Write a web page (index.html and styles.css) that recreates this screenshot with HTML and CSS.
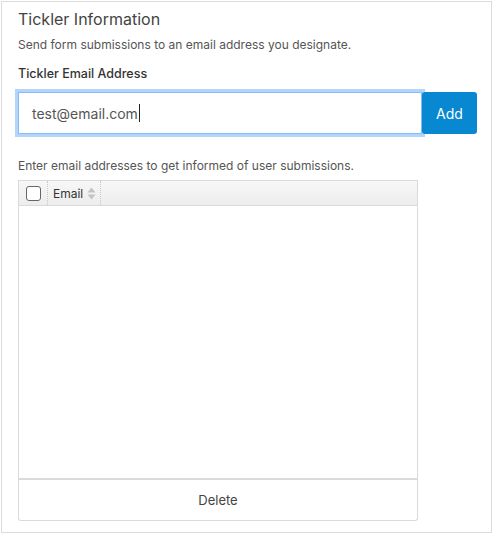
FILE: index.html
```html
<!DOCTYPE html>
<html>
<head>
<meta charset="utf-8">
<link rel="stylesheet" href="styles.css">
</head>
<body>
<div class="panel">
  <div class="title">Tickler Information</div>
  <div class="desc">Send form submissions to an email address you designate.</div>
  <div class="label">Tickler Email Address</div>
  <div class="input-row">
    <div class="input"><span class="value">test@email.com</span><span class="caret"></span></div>
    <button class="add">Add</button>
  </div>
  <div class="hint">Enter email addresses to get informed of user submissions.</div>
  <div class="grid">
    <div class="grid-head">
      <div class="cell cell-check"><span class="checkbox"></span></div>
      <div class="cell cell-email">Email
        <svg class="sort" width="9" height="13" viewBox="0 0 9 13"><path d="M4.5 0.5 L8.5 5.5 L0.5 5.5 Z" fill="#c4c4c4"/><path d="M0.5 7.5 L8.5 7.5 L4.5 12.5 Z" fill="#c4c4c4"/></svg>
      </div>
    </div>
    <div class="grid-body"></div>
  </div>
  <button class="delete">Delete</button>
</div>
</body>
</html>
```
FILE: styles.css
```css
* { box-sizing: border-box; }
html, body { margin: 0; padding: 0; background: #fff; }
body { font-family: Inter, "Noto Sans", Arial, sans-serif; color: #555; }
.panel {
  margin: 1px 0 0 1px;
  width: 491px;
  height: 532px;
  border: 1px solid #dcdcdc;
  padding: 6px 14px 0 16px;
}
.title { font-size: 16px; line-height: 22px; color: #444; }
.desc { margin-top: 6px; font-size: 12px; line-height: 18px; color: #555; }
.label { margin-top: 11px; font-size: 12.5px; line-height: 18px; color: #333; font-weight: 500; }
.input-row { margin-top: 9px; display: flex; height: 42px; }
.input {
  width: 404px;
  height: 42px;
  border: 1px solid #85bcf7;
  box-shadow: 0 0 0 3px #b3d4fb;
  padding-left: 13px;
  display: flex;
  align-items: center;
  font-size: 14px;
  color: #555;
  background: #fff;
}
.caret { display: inline-block; width: 1px; height: 18px; background: #222; margin-left: 1px; }
.add {
  position: relative;
  width: 55px;
  height: 42px;
  border: none;
  border-radius: 3px;
  background: #0788d1;
  color: #fff;
  font-family: inherit;
  font-size: 14px;
  padding: 0;
}
.hint { margin-top: 23px; font-size: 12px; line-height: 18px; color: #555; }
.grid {
  margin-top: 5px;
  width: 400px;
  height: 300px;
  border: 1px solid #dadada;
  border-bottom: 2px solid #dadada;
  display: flex;
  flex-direction: column;
}
.grid-head {
  height: 25px;
  background: linear-gradient(#f7f7f7, #ededed);
  border-bottom: 1px solid #dadada;
  display: flex;
}
.cell { height: 100%; display: flex; align-items: center; }
.cell-check { width: 29px; padding-left: 7px; border-right: 1px dotted #c8c8c8; }
.checkbox {
  width: 15px; height: 15px;
  border: 1px solid #666;
  border-radius: 3px;
  background: #fff;
}
.cell-email {
  width: 53px;
  padding-left: 5px;
  border-right: 1px dotted #c8c8c8;
  font-size: 12px;
  color: #333;
  gap: 4px;
}
.sort { display: block; }
.grid-body { flex: 1; background: #fff; }
.delete {
  display: block;
  width: 400px;
  height: 41px;
  border: 1px solid #dadada;
  border-top: none;
  border-radius: 0 0 3px 3px;
  background: #fff;
  font-family: inherit;
  font-size: 13px;
  color: #444;
  padding: 0;
}
```
